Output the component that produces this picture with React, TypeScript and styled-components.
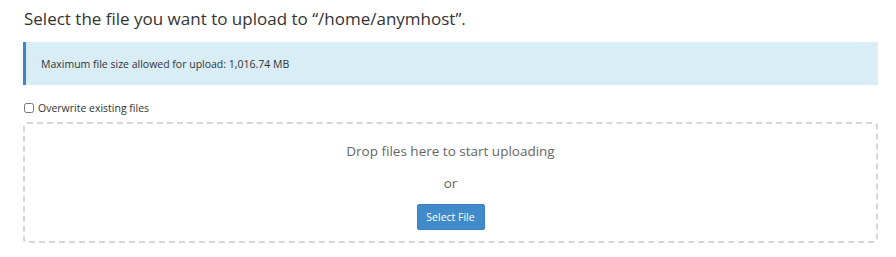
import React from 'react';
import styled, { createGlobalStyle } from 'styled-components';

const colors = {
  text: '#333333',
  muted: '#666666',
  infoBg: '#d9edf7',
  infoBorder: '#3a87c8',
  dash: '#d6d6d6',
  primary: '#428bca',
};

const GlobalStyle = createGlobalStyle`
  html, body {
    margin: 0;
    padding: 0;
    background: #ffffff;
  }
  body {
    font-family: "Open Sans", "Liberation Sans", sans-serif;
    color: ${colors.text};
  }
`;

export default function App() {
  return (
    <>
      <GlobalStyle />
      <Page>
        <Title>Select the file you want to upload to “/home/anymhost”.</Title>
        <InfoAlert>Maximum file size allowed for upload: 1,016.74 MB</InfoAlert>
        <CheckRow>
          <input type="checkbox" />
          <span>Overwrite existing files</span>
        </CheckRow>
        <DropZone>
          <DropText>Drop files here to start uploading</DropText>
          <OrText>or</OrText>
          <PrimaryButton type="button">Select File</PrimaryButton>
        </DropZone>
      </Page>
    </>
  );
}

const Page = styled.div`
  padding: 6px 18px 0 23px;
  display: flex;
  flex-direction: column;
`;

const Title = styled.h1`
  margin: 0 0 0 1px;
  font-size: 17px;
  font-weight: 400;
  line-height: 26px;
  color: ${colors.text};
`;

const InfoAlert = styled.div`
  margin-top: 10px;
  height: 43px;
  box-sizing: border-box;
  padding: 0 15px;
  display: flex;
  align-items: center;
  background: ${colors.infoBg};
  border-left: 3px solid ${colors.infoBorder};
  font-size: 10.5px;
  color: ${colors.text};
`;

const CheckRow = styled.label`
  margin-top: 16px;
  display: flex;
  align-items: center;
  gap: 4px;
  font-size: 10.5px;
  color: ${colors.text};

  & input {
    margin: 0 0 0 1px;
    width: 10px;
    height: 10px;
  }
`;

const DropZone = styled.div`
  margin-top: 7px;
  height: 121px;
  box-sizing: border-box;
  border: 2px dashed ${colors.dash};
  border-radius: 4px;
  display: flex;
  flex-direction: column;
  align-items: center;
  padding-top: 17px;
`;

const DropText = styled.div`
  font-size: 13.5px;
  line-height: 20px;
  color: ${colors.muted};
`;

const OrText = styled.div`
  margin-top: 12px;
  font-size: 13.5px;
  line-height: 20px;
  color: ${colors.muted};
`;

const PrimaryButton = styled.button`
  margin-top: 11px;
  width: 68px;
  height: 26px;
  padding: 0;
  border: 1px solid #3b84c4;
  border-radius: 2px;
  background: ${colors.primary};
  color: #ffffff;
  font-family: "Open Sans", "Liberation Sans", sans-serif;
  font-size: 10.5px;
`;
